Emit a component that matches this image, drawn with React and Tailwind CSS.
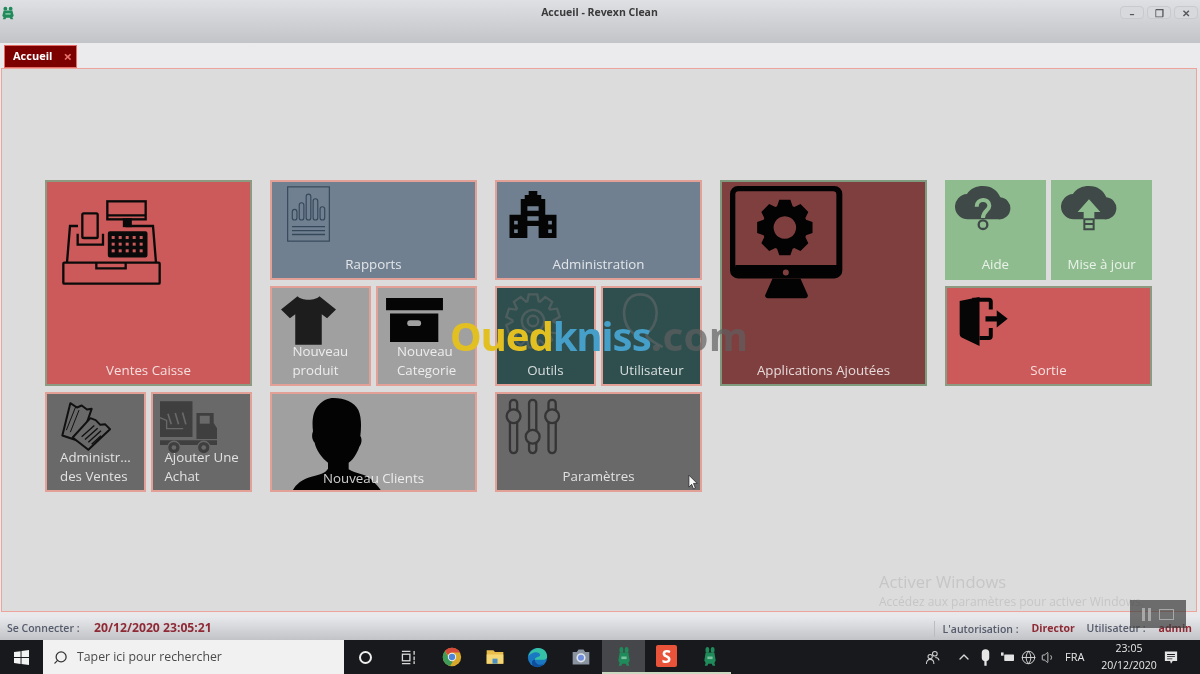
import React from 'react';
import { Search, ChevronUp, Volume1, Globe } from 'lucide-react';

// builds a cog outline, used by the two gear icons
const gearPath = (cx, cy, outer, inner, teeth) => {
  const pts = [];
  const step = (Math.PI * 2) / teeth;
  for (let i = 0; i < teeth; i++) {
    const a = i * step - Math.PI / 2;
    [[-0.5, inner], [-0.28, outer], [0.28, outer], [0.5, inner]].forEach(([o, r]) => {
      const t = a + o * step * 0.9;
      pts.push(`${(cx + Math.cos(t) * r).toFixed(1)} ${(cy + Math.sin(t) * r).toFixed(1)}`);
    });
  }
  return `M${pts.join('L')}Z`;
};

const CashRegister = () => (
  <svg viewBox="0 0 295 255" className="w-[99px] h-[85px]" fill="none" stroke="#0a0a0a" strokeWidth="7">
    <rect x="3" y="188" width="289" height="63" rx="3" />
    <path d="M102 188v17h88v-17" />
    <path d="M14 188l9-110h24M190 78h82l9 110" />
    <rect x="135" y="4" width="115" height="54" />
    <path d="M135 46h115" />
    <rect x="185" y="58" width="20" height="20" fill="#0a0a0a" />
    <rect x="60" y="40" width="46" height="74" rx="4" />
    <path d="M46 101v33h76v-33" />
    <rect x="140" y="97" width="112" height="72" rx="3" fill="#0a0a0a" />
    <g fill="#cd5a5a" stroke="none">
      {[108, 128, 148].map((y) =>
        [152, 173, 194, 215, 236].map((x) => <rect key={x + '-' + y} x={x - 4} y={y} width="9" height="9" />)
      )}
    </g>
  </svg>
);

const ReportIcon = () => (
  <svg viewBox="0 0 130 168" className="w-[43px] h-[56px]" fill="none" stroke="#35475a" strokeWidth="3.5">
    <rect x="2" y="2" width="126" height="164" />
    {[[16, 70, 32], [37, 50, 52], [58, 24, 78], [79, 38, 64], [100, 62, 40]].map(([x, y, h]) => (
      <rect key={x} x={x} y={y} width="14" height={h} rx="7" />
    ))}
    <path d="M15 122h100M15 134h100M15 146h100" strokeWidth="4" />
  </svg>
);

const Shirt = () => (
  <svg viewBox="0 0 166 147" className="w-[55px] h-[49px]" fill="#1d1d1d">
    <path d="M50 0c10 14 56 14 66 0l50 40-27 27-16-12v92H43V55L27 67 0 40z" />
  </svg>
);

const ArchiveBox = () => (
  <svg viewBox="0 0 172 133" className="w-[57px] h-[44px]" fill="#050505">
    <rect x="0" y="0" width="172" height="37" />
    <path d="M12 47h146v86H12z" />
    <rect x="64" y="67" width="42" height="18" rx="9" fill="#a0a0a0" />
  </svg>
);

const Tickets = () => (
  <svg viewBox="0 0 150 146" className="w-[50px] h-[49px]" fill="#696969" stroke="#101010" strokeWidth="6" strokeLinejoin="round">
    <path d="M28 3l20 13 14-6 16 12 14-2-34 98L4 100z" />
    <path d="M16 84l28-70M28 90l26-66" strokeWidth="3" />
    <path d="M88 48l16 6 14 14 14-2 15 15-65 62-47-37z" />
    <path d="M62 104l38-34M72 112l38-34M82 120l38-34M92 126l28-25" strokeWidth="4" />
  </svg>
);

const Truck = () => (
  <svg viewBox="0 0 172 162" className="w-[57px] h-[54px]" fill="#3f3f3f">
    <path d="M0 0h98v108H0z" />
    <path d="M24 38l10 32M46 36l10 34M68 34l10 36" stroke="#696969" strokeWidth="5" fill="none" />
    <path d="M0 50l20 8v25h50" stroke="#696969" strokeWidth="4" fill="none" />
    <path d="M110 36h52v30l10 16v32H110z" />
    <path d="M120 44h30v24h-30z" fill="#696969" />
    <path d="M0 118h172v14H0z" />
    <circle cx="42" cy="140" r="19" fill="#3f3f3f" stroke="#696969" strokeWidth="4" />
    <circle cx="42" cy="140" r="7" fill="#696969" />
    <circle cx="132" cy="140" r="19" fill="#3f3f3f" stroke="#696969" strokeWidth="4" />
    <circle cx="132" cy="140" r="7" fill="#696969" />
  </svg>
);

const Silhouette = () => (
  <svg viewBox="0 0 270 282" className="w-[90px] h-[94px]" fill="#030303">
    <path d="M125 0c32 0 62 12 74 36 10 22 9 52 6 78 6 8 4 24-3 32-8 24-22 42-32 48v20c20 14 52 12 72 34 12 12 22 24 28 34H0c8-20 28-38 58-46 24-6 42-10 50-24v-18c-18-14-36-38-40-60-8-8-10-22-5-34-4-34 0-62 18-80C92 8 108 0 125 0z" />
  </svg>
);

const Building = () => (
  <svg viewBox="0 0 142 142" className="w-[48px] h-[47px]" fill="#050505">
    <path d="M58 0h26v12h12v12h12v48h34v70H0V72h34V24h12V12h12z" />
    <g fill="#708090">
      <path d="M54 46h34v14H54zM54 76h34v14H54zM54 106h34v36H54z" />
      <rect x="14" y="90" width="11" height="11" />
      <rect x="14" y="116" width="11" height="11" />
      <rect x="117" y="90" width="11" height="11" />
      <rect x="117" y="116" width="11" height="11" />
    </g>
  </svg>
);

const GearOutline = () => (
  <svg viewBox="0 0 170 170" className="w-[56px] h-[56px]" fill="none" stroke="#4e5e5e" strokeWidth="7">
    <path d={gearPath(85, 85, 82, 62, 10)} />
    <circle cx="85" cy="85" r="34" />
    <circle cx="85" cy="85" r="16" />
  </svg>
);

const PersonOutline = () => (
  <svg viewBox="0 0 130 170" className="w-[43px] h-[56px]" fill="none" stroke="#4e5e5e" strokeWidth="8">
    <path d="M55 4C22 4 6 30 6 62c0 26 12 50 30 62M55 4c33 0 50 26 50 58 0 26-14 50-32 62 0 16 24 24 50 40" />
  </svg>
);

const Sliders = () => (
  <svg viewBox="0 0 170 170" className="w-[56px] h-[57px]" fill="none" stroke="#353535" strokeWidth="7">
    <rect x="15" y="4" width="22" height="162" rx="11" />
    <circle cx="26" cy="54" r="21" fill="#696969" />
    <rect x="73" y="4" width="22" height="162" rx="11" />
    <circle cx="84" cy="116" r="21" fill="#696969" />
    <rect x="132" y="4" width="22" height="162" rx="11" />
    <circle cx="143" cy="54" r="21" fill="#696969" />
  </svg>
);

const MonitorGear = () => (
  <svg viewBox="0 0 340 340" className="w-[113px] h-[113px]">
    <path fillRule="evenodd" fill="#030303" d="M24 0h290a24 24 0 0 1 24 24v230a24 24 0 0 1-24 24H24a24 24 0 0 1-24-24V24A24 24 0 0 1 24 0zM26 16a10 10 0 0 0-10 10v212a10 10 0 0 0 10 10h284a10 10 0 0 0 10-10V26a10 10 0 0 0-10-10z" />
    <path fill="#030303" d="M16 238h306v22H16zM128 278h84l22 50a8 8 0 0 1-8 10H114a8 8 0 0 1-8-10z" />
    <circle cx="168" cy="260" r="9" fill="#803f3f" />
    <path fillRule="evenodd" fill="#030303" d={gearPath(165, 125, 85, 68, 8) + 'M165 91a34 34 0 1 0 0.1 0z'} />
  </svg>
);

const CloudHelp = () => (
  <svg viewBox="0 0 168 135" className="w-[56px] h-[45px]">
    <path fill="#3f4a48" d="M40 100a38 38 0 0 1-4-76C46 8 64 0 84 0c26 0 44 14 52 34a33 33 0 0 1-6 66z" />
    <path d="M65 62c0-26 38-26 38-3 0 15-19 15-19 37" fill="none" stroke="#8fbc8f" strokeWidth="12" />
    <circle cx="84" cy="116" r="13" fill="#8fbc8f" stroke="#3f4a48" strokeWidth="7" />
  </svg>
);

const CloudUpload = () => (
  <svg viewBox="0 0 168 135" className="w-[56px] h-[45px]">
    <path fill="#3f4a48" d="M40 100a38 38 0 0 1-4-76C46 8 64 0 84 0c26 0 44 14 52 34a33 33 0 0 1-6 66z" />
    <path fill="#8fbc8f" d="M84 40l34 38H100v22H68V78H50z" />
    <path d="M70 100h28v30H70zM70 114h28" fill="none" stroke="#3f4a48" strokeWidth="6" />
  </svg>
);

const ExitDoor = () => (
  <svg viewBox="0 0 148 148" className="w-[49px] h-[49px]" fill="#060606">
    <path d="M2 12L62 0v148L8 122a10 10 0 0 1-6-10z" />
    <path d="M40 2h50a12 12 0 0 1 12 12v24H90V14H40zM90 94h12v24a12 12 0 0 1-12 12H62v-12h28z" />
    <path d="M80 58h34V40l33 26-33 26V74H80z" />
  </svg>
);

const Frog = ({ size = 'w-[14px] h-[14px]', color = '#1f8a5a' }) => (
  <svg viewBox="0 0 16 16" className={size} preserveAspectRatio="none" fill={color}>
    <circle cx="5" cy="3" r="2.2" />
    <circle cx="11" cy="3" r="2.2" />
    <path d="M3 5h10l1.5 6-1.5 2 1 2h-3l-1-1.5H6L5 15H2l1-2-1.5-2z" />
    <path d="M5 8h6v2H5z" fill="#b8e6cc" opacity="0.6" />
  </svg>
);

const Chrome = () => (
  <svg viewBox="0 0 24 24" className="w-5 h-5">
    <circle cx="12" cy="12" r="11" fill="#d9a92c" />
    <path d="M12 1a11 11 0 0 1 9.6 5.5H12a5.5 5.5 0 0 0-5 3L3.6 4.8A11 11 0 0 1 12 1z" fill="#d64a3b" />
    <path d="M3.6 4.8L8 13a5.5 5.5 0 0 0 5 4.4L9.8 22.8A11 11 0 0 1 3.6 4.8z" fill="#3f9b58" />
    <circle cx="12" cy="12" r="5" fill="#f2f2f2" />
    <circle cx="12" cy="12" r="3.8" fill="#4d86d8" />
  </svg>
);

const Folder = () => (
  <svg viewBox="0 0 24 24" className="w-5 h-5">
    <path d="M2 4h8l2 2h10v14H2z" fill="#e8bc4a" />
    <path d="M2 9h20v11H2z" fill="#f4d675" />
    <path d="M9 14h6v6H9z" fill="#4a90c4" />
  </svg>
);

const Edge = () => (
  <svg viewBox="0 0 24 24" className="w-[21px] h-[21px]">
    <circle cx="12" cy="12" r="11" fill="#1a78c2" />
    <path d="M1.5 11C3 4 9 1 13 1c6 0 10 4.5 10 10 0 2.5-2.5 3.5-5 3.5H9c0-3.5 6-3 6-5.5C15 7 12.5 6 10.5 6 6 6 2.5 9 1.5 11z" fill="#35c1a5" />
    <path d="M9 14.5c0 4 4 6.5 8 5.5l2.5-1.2A11 11 0 0 1 8 22.4C4.5 20 5 14 9 14.5z" fill="#0d4f9e" />
  </svg>
);

const Camera = () => (
  <svg viewBox="0 0 24 24" className="w-5 h-5">
    <path d="M2 6h5l2-3h6l2 3h5v15H2z" fill="#8a94a0" />
    <circle cx="12" cy="13" r="5.5" fill="#dfe4ea" />
    <circle cx="12" cy="13" r="3.6" fill="#6f8fdc" />
  </svg>
);

const Tile = ({ label, bg, border = 'border-[#e2a096]', span = '', iconClass, icon, multi }) => (
  <div className={`grid border-2 overflow-hidden ${bg} ${border} ${span}`}>
    <div className={`[grid-area:1/1] self-start justify-self-start ${iconClass}`}>{icon}</div>
    <div className={`[grid-area:1/1] self-end justify-self-center pb-[4px] text-[13.3px] leading-[19px] text-white/80 ${multi ? 'text-left' : 'text-center whitespace-nowrap'}`}>
      {label}
    </div>
  </div>
);

const Group = ({ children }) => (
  <div className="grid grid-cols-2 auto-rows-[100.5px] gap-[5.5px] w-[207px] content-start">{children}</div>
);

export default function App() {
  return (
    <div className="relative w-[1200px] h-[674px] overflow-hidden flex flex-col bg-[#e9e9ec] font-['Open_Sans','Liberation_Sans',sans-serif] blur-[0.5px]">
      {/* Title bar */}
      <div className="h-[43px] shrink-0 relative flex items-start bg-gradient-to-b from-[#dfe0e4] to-[#c3c4c8] px-[1px] pt-[6px]">
        <Frog />
        <div className="flex-1 pl-[64px] text-center text-[10.5px] leading-[13px] font-bold text-[#3a3a3a]">
          Accueil - Revexn Clean
        </div>
        <div className="flex gap-[3px] pr-[1px]">
          {['–', '❐', '✕'].map((g) => (
            <div key={g} className="w-[24px] h-[13px] flex items-center justify-center rounded-sm border border-[#c8cacd] bg-[#d8d9dc] text-[10px] font-bold leading-none text-[#55575b]">
              {g}
            </div>
          ))}
        </div>
      </div>

      {/* Tab strip */}
      <div className="h-[25px] shrink-0 flex items-end pl-1 bg-[#ebebee]">
        <div className="w-[73px] h-[23px] flex items-center justify-between pl-2 pr-[4px] bg-[#7d0000] border border-[#e46c64] text-white text-[11px] font-bold">
          Accueil
          <span className="text-[#e8736c] text-[15px] leading-none">×</span>
        </div>
      </div>

      {/* Main area */}
      <div className="relative h-[544px] shrink-0 ml-[1px] mr-[3px] bg-[#dcdcdc] border border-[#eca49c] pl-[43px] pt-[110.5px] flex gap-[18px]">
        <Group>
          <Tile span="col-span-2 row-span-2" bg="bg-[#cd5a5a]" border="border-[#8b9a80]" iconClass="ml-[15px] mt-[18px]" icon={<CashRegister />} label="Ventes Caisse" />
          <Tile bg="bg-[#696969]" iconClass="ml-[14px] mt-[8px]" icon={<Tickets />} multi label={<>Administr...<br />des Ventes</>} />
          <Tile bg="bg-[#696969]" iconClass="ml-[7px] mt-[7px]" icon={<Truck />} multi label={<>Ajouter Une<br />Achat</>} />
        </Group>
        <Group>
          <Tile span="col-span-2" bg="bg-[#708090]" iconClass="ml-[15px] mt-[4px]" icon={<ReportIcon />} label="Rapports" />
          <Tile bg="bg-[#a0a0a0]" iconClass="ml-[9px] mt-[8px]" icon={<Shirt />} multi label={<>Nouveau<br />produit</>} />
          <Tile bg="bg-[#a0a0a0]" iconClass="ml-[8px] mt-[10px]" icon={<ArchiveBox />} multi label={<>Nouveau<br />Categorie</>} />
          <Tile span="col-span-2" bg="bg-[#a0a0a0]" iconClass="ml-[20px] mt-[4px]" icon={<Silhouette />} label="Nouveau Clients" />
        </Group>
        <Group>
          <Tile span="col-span-2" bg="bg-[#708090]" iconClass="ml-[12px] mt-[9px]" icon={<Building />} label="Administration" />
          <Tile bg="bg-[#2f4f4f]" iconClass="ml-[8px] mt-[5px]" icon={<GearOutline />} label="Outils" />
          <Tile bg="bg-[#2f4f4f]" iconClass="ml-[19px] mt-[5px]" icon={<PersonOutline />} label="Utilisateur" />
          <Tile span="col-span-2" bg="bg-[#696969]" iconClass="ml-[8px] mt-[4px]" icon={<Sliders />} label="Paramètres" />
        </Group>
        <Group>
          <Tile span="col-span-2 row-span-2" bg="bg-[#803f3f]" border="border-[#7f9a7c]" iconClass="ml-[8px] mt-[4px]" icon={<MonitorGear />} label="Applications Ajoutées" />
        </Group>
        <Group>
          <Tile bg="bg-[#8fbc8f]" border="border-[#8fbc8f]" iconClass="ml-[8px] mt-[4px]" icon={<CloudHelp />} label="Aide" />
          <Tile bg="bg-[#8fbc8f]" border="border-[#8fbc8f]" iconClass="ml-[8px] mt-[4px]" icon={<CloudUpload />} label="Mise à jour" />
          <Tile span="col-span-2" bg="bg-[#cd5a5a]" border="border-[#8b9a80]" iconClass="ml-[12px] mt-[9px]" icon={<ExitDoor />} label="Sortie" />
        </Group>

        {/* Windows activation notice */}
        <div className="absolute left-[877px] top-[502px] whitespace-nowrap text-[#c6c6c6]">
          <div className="text-[16.5px] leading-[22px]">Activer Windows</div>
          <div className="text-[12px] leading-[17px]">Accédez aux paramètres pour activer Windows.</div>
        </div>
      </div>

      {/* Status bar */}
      <div className="mt-[4px] h-[24px] shrink-0 flex items-center pt-[1px] pl-[7px] pr-2 bg-gradient-to-b from-[#e9eaed] to-[#c2c3c7] text-[10.5px] font-semibold text-[#555b6b]">
        <span className="w-[87px]">Se Connecter :</span>
        <span className="text-[12.2px] font-bold text-[#8f2a35]">20/12/2020 23:05:21</span>
        <span className="ml-auto h-[16px] border-l border-[#bbbcc0] pl-2 w-[98px] leading-[16px]">L'autorisation :</span>
        <span className="w-[55px] font-bold text-[#8f2a35]">Director</span>
        <span className="w-[72px]">Utilisateur :</span>
        <span className="font-bold text-[#8f2a35]">admin</span>
      </div>

      {/* Windows taskbar */}
      <div className="h-[34px] shrink-0 flex items-stretch bg-[#17191c] text-[#e8e8e8]">
        <div className="w-[43px] flex items-center justify-center">
          <svg viewBox="0 0 16 16" className="w-[15px] h-[15px]" fill="#f2f2f2">
            <path d="M0 2.2l7-1v6.300H0zM8 1l8-1v7.500H8zM0 8.500h7v6.300l-7-1zM8 8.500h8V16l-8-1z" />
          </svg>
        </div>
        <div className="w-[301px] flex items-center gap-[9px] pl-[10px] pt-[1px] bg-[#f1f1f1] text-[12.3px] text-[#4a4a4a]">
          <Search size={15} className="-scale-x-100 text-[#333]" />
          Taper ici pour rechercher
        </div>
        <div className="w-[43px] flex items-center justify-center">
          <div className="w-[13px] h-[13px] rounded-full border-2 border-[#eeeeee]" />
        </div>
        <div className="w-[43px] flex items-center justify-center">
          <svg viewBox="0 0 16 16" className="w-[15px] h-[15px]" fill="none" stroke="#d8d8d8" strokeWidth="1.4">
            <path d="M1 1.500h9M1 14.500h9M14 1v4M14 7v4M14 12v3" />
            <rect x="1.500" y="4.500" width="8" height="7" />
          </svg>
        </div>
        {[<Chrome />, <Folder />, <Edge />, <Camera />].map((ic, i) => (
          <div key={i} className="w-[43px] flex items-center justify-center">{ic}</div>
        ))}
        <div className="w-[43px] flex items-center justify-center bg-[#45474a] border-b-2 border-[#c9d8c0]">
          <Frog size="w-[14px] h-[21px]" />
        </div>
        <div className="w-[43px] flex items-center justify-center border-b-2 border-[#c9d8c0]">
          <div className="w-[21px] h-[22px] rounded-[2px] bg-[#e8533a] flex items-center justify-center text-white font-bold text-[17px] leading-none">S</div>
        </div>
        <div className="w-[43px] flex items-center justify-center border-b-2 border-[#c9d8c0]">
          <Frog size="w-[14px] h-[21px]" />
        </div>

        <div className="ml-auto flex items-center pr-[22px]">
          <svg viewBox="0 0 16 16" className="w-[15px] h-[15px] mr-[16px]" fill="none" stroke="#d0d0d0" strokeWidth="1.1">
            <circle cx="10.500" cy="4" r="2.500" />
            <circle cx="5.500" cy="7" r="2.300" />
            <path d="M1.500 15c0-3 1.500-5 4-5s4 2 4 5M11 8c2 0 3.500 1 4 3" />
          </svg>
          <ChevronUp size={16} className="mr-[9px] text-[#d8d8d8]" />
          <svg viewBox="0 0 12 22" className="w-[9px] h-[17px] mr-[11px]" fill="#e6e6e6">
            <rect x="1" y="0" width="10" height="16" rx="5" />
            <rect x="4.500" y="15" width="3" height="7" />
          </svg>
          <svg viewBox="0 0 20 14" className="w-[13px] h-[10px] mr-[7px]" fill="#e2e2e2">
            <rect x="5" y="3" width="15" height="10" rx="1" />
            <rect x="0" y="0" width="4" height="5" />
          </svg>
          <Globe size={15} strokeWidth={1.5} className="mr-[5px] text-[#d8d8d8]" />
          <Volume1 size={15} strokeWidth={1.5} className="mr-[9px] text-[#d0d0d0]" />
          <span className="w-[29px] text-[11px] font-medium">FRA</span>
          <div className="w-[70px] text-center text-[10.5px] leading-[17px]">
            <div>23:05</div>
            <div>20/12/2020</div>
          </div>
          <svg viewBox="0 0 16 16" className="w-[14px] h-[15px]" fill="#e4e4e4">
            <path fillRule="evenodd" d="M1 1h14v11h-5l-2 3-1-3H1zM3.500 4v1h9V4zM3.500 6.500v1h9v-1zM3.500 9v1h6V9z" />
          </svg>
        </div>
      </div>

      {/* Ouedkniss watermark */}
      <div className="absolute left-[450px] top-[316px] flex text-[40px] leading-[40px] font-bold font-['Noto_Sans','Open_Sans',sans-serif] tracking-[-1px]">
        <span className="text-[#e3c022]">Oued</span>
        <span className="text-[#459fc9]">kniss</span>
        <span className="text-[#5f5f5f]/70 tracking-[0.5px]">.com</span>
      </div>

      {/* Video player overlay */}
      <div className="absolute left-[1130px] top-[600px] w-[56px] h-[28px] flex items-center justify-around px-2 bg-[#3c3c3c]/70">
        <div className="flex gap-[3px]">
          <div className="w-[3px] h-[13px] bg-[#a8a8a8]" />
          <div className="w-[3px] h-[13px] bg-[#a8a8a8]" />
        </div>
        <div className="w-[15px] h-[11px] border border-[#a8a8a8]" />
      </div>

      {/* Mouse pointer */}
      <svg viewBox="0 0 12 18" className="absolute left-[688px] top-[474px] w-[11px] h-[17px]" fill="#fafafa" stroke="#222" strokeWidth="0.8">
        <path d="M1 1v13l3-3 2 5 2-1-2-5h4z" />
      </svg>
    </div>
  );
}
